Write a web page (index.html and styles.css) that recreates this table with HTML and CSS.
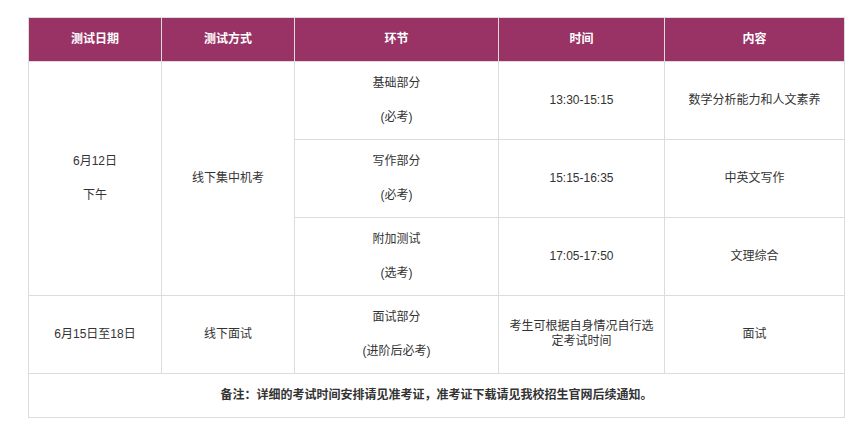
FILE: index.html
```html
<!DOCTYPE html>
<html lang="zh-CN">
<head>
<meta charset="utf-8">
<title>测试安排</title>
<link rel="stylesheet" href="styles.css">
</head>
<body>
<div class="page">
  <table class="schedule">
    <colgroup>
      <col class="c1"><col class="c2"><col class="c3"><col class="c4"><col class="c5">
    </colgroup>
    <thead>
      <tr>
        <th>测试日期</th>
        <th>测试方式</th>
        <th>环节</th>
        <th>时间</th>
        <th>内容</th>
      </tr>
    </thead>
    <tbody>
      <tr>
        <td rowspan="3"><p>6月12日</p><p>下午</p></td>
        <td rowspan="3"><p>线下集中机考</p></td>
        <td><p>基础部分</p><p>(必考)</p></td>
        <td><p>13:30-15:15</p></td>
        <td><p>数学分析能力和人文素养</p></td>
      </tr>
      <tr>
        <td><p>写作部分</p><p>(必考)</p></td>
        <td><p>15:15-16:35</p></td>
        <td><p>中英文写作</p></td>
      </tr>
      <tr>
        <td><p>附加测试</p><p>(选考)</p></td>
        <td><p>17:05-17:50</p></td>
        <td><p>文理综合</p></td>
      </tr>
      <tr>
        <td><p>6月15日至18日</p></td>
        <td><p>线下面试</p></td>
        <td><p>面试部分</p><p>(进阶后必考)</p></td>
        <td class="wrap"><p>考生可根据自身情况自行选定考试时间</p></td>
        <td><p>面试</p></td>
      </tr>
      <tr>
        <td colspan="5" class="note"><p>备注：详细的考试时间安排请见准考证，准考证下载请见我校招生官网后续通知。</p></td>
      </tr>
    </tbody>
  </table>
</div>
</body>
</html>
```

FILE: styles.css
```css
html, body {
  margin: 0;
  padding: 0;
  background: #ffffff;
}

.page {
  padding: 17px 0 0 28px;
}

.schedule {
  border-collapse: collapse;
  table-layout: fixed;
  width: 816px;
  font-family: "Liberation Sans", "Noto Sans CJK SC", sans-serif;
  font-size: 12px;
  color: #333333;
}

.c1 { width: 133px; }
.c2 { width: 133px; }
.c3 { width: 204px; }
.c4 { width: 166px; }
.c5 { width: 180px; }

.schedule th,
.schedule td {
  border: 1px solid #dcdcdc;
  text-align: center;
  vertical-align: middle;
  line-height: 18px;
}

.schedule th {
  background: #993366;
  color: #ffffff;
  font-weight: bold;
  padding: 12px 8px 13px;
}

.schedule td {
  padding: 12px 8px 13px;
}

.schedule p {
  margin: 0;
}

.schedule p + p {
  margin-top: 16px;
}

.schedule td.wrap {
  line-height: 15px;
}

.schedule td.note {
  font-weight: bold;
  padding: 12px 8px 13px;
}
```
